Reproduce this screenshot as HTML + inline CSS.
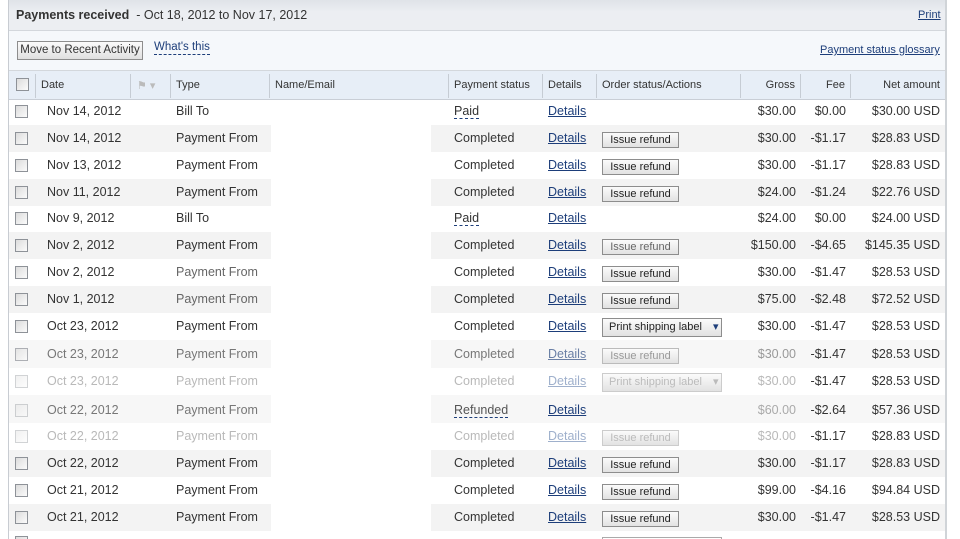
<!DOCTYPE html>
<html><head><meta charset="utf-8"><style>
*{margin:0;padding:0;box-sizing:border-box}
html,body{width:960px;height:539px;overflow:hidden}
body{background:#fff;font-family:"Liberation Sans",Arial,sans-serif;font-size:12px;color:#333;position:relative}
.a{position:absolute}
.lb{position:absolute;left:8px;top:0;width:1px;height:539px;background:#c8ccd2}
.rb{position:absolute;left:945px;top:0;width:2px;height:539px;background:#d0d4d8}
.hdr{left:9px;top:0;width:936px;height:31px;background:linear-gradient(#dfe3e8,#eceef2 40%,#eceef2);border-bottom:1px solid #d3d7dc}
.tb{left:9px;top:31px;width:936px;height:40px;background:#f5f8fb;border-bottom:1px solid #d3d7dc}
.th{left:9px;top:71px;width:936px;height:29px;background:#e7eef7;border-bottom:1px solid #c9ced6}
.sep{position:absolute;top:74px;width:1px;height:24px;background:#c6ccd4}
.cb{position:absolute;width:13px;height:13px;border:1px solid #8e9298;background:linear-gradient(135deg,#dcdcdc,#fbfbfb)}
a{color:#1d3e7a;text-decoration:underline}
.row{position:absolute;left:9px;width:936px}
.g{background:#f3f3f3}
.w{position:absolute;left:262px;width:160px;background:#fff;top:0;bottom:0}
.t{position:absolute;font-size:12.5px;white-space:nowrap}
.btn{position:absolute;left:593px;width:77px;height:16px;border:1px solid #8d8d8d;background:linear-gradient(#fbfbfb,#e2e2e2);font-size:11px;text-align:center;line-height:14px;color:#222}
.r{text-align:right}
.dash{border-bottom:1px dashed #1d3e7a}
.f{color:#b9b9b9}
.f .cb{opacity:.4}
</style></head><body>
<div class="lb"></div><div class="rb"></div>
<div class="a hdr"></div>
<div class="a" style="left:16px;top:8px;font-size:12.5px"><b>Payments received</b> &nbsp;- Oct 18, 2012 to Nov 17, 2012</div>
<div class="a" style="left:918px;top:9px;font-size:11px"><a>Print</a></div>
<div class="a tb"></div>
<div class="a" style="left:17px;top:41px;width:126px;height:19px;border:1px solid #8d8d8d;background:linear-gradient(#fbfbfb,#e0e0e0);font-size:11.5px;text-align:center;line-height:17px">Move to Recent Activity</div>
<div class="a" style="left:154px;top:41px;font-size:11.5px;color:#1d3e7a;border-bottom:1px dashed #1d3e7a;line-height:13px">What's this</div>
<div class="a" style="left:820px;top:44px;font-size:11px"><a>Payment status glossary</a></div>
<div class="a th"></div>
<div class="sep" style="left:35px"></div><div class="sep" style="left:130px"></div><div class="sep" style="left:170px"></div><div class="sep" style="left:269px"></div><div class="sep" style="left:448px"></div><div class="sep" style="left:542px"></div><div class="sep" style="left:596px"></div><div class="sep" style="left:740px"></div><div class="sep" style="left:800px"></div><div class="sep" style="left:850px"></div>
<div class="cb" style="left:16px;top:78px"></div>
<div class="a" style="left:41px;top:79px;font-size:11px">Date</div>
<div class="a" style="left:137px;top:79px;font-size:11px;color:#bbb">⚑ ▾</div>
<div class="a" style="left:176px;top:79px;font-size:11px">Type</div>
<div class="a" style="left:275px;top:79px;font-size:11px">Name/Email</div>
<div class="a" style="left:454px;top:79px;font-size:11px">Payment status</div>
<div class="a" style="left:548px;top:79px;font-size:11px">Details</div>
<div class="a" style="left:602px;top:79px;font-size:11px">Order status/Actions</div>
<div class="a r" style="left:740px;top:79px;width:55px;font-size:11px">Gross</div>
<div class="a r" style="left:800px;top:79px;width:45px;font-size:11px">Fee</div>
<div class="a r" style="left:850px;top:79px;width:90px;font-size:11px">Net amount</div>

<div class="row" style="top:99px;height:26px"><div class="cb" style="left:6px;top:6px"></div><div class="t" style="left:38px;top:5px">Nov 14, 2012</div><div class="t" style="left:167px;top:5px">Bill To</div><div class="t dash" style="left:445px;top:5px;color:#333">Paid</div><div class="t" style="left:539px;top:5px"><a>Details</a></div><div class="t r" style="left:731px;top:5px;width:56px">$30.00</div><div class="t r" style="left:791px;top:5px;width:46px">$0.00</div><div class="t r" style="left:841px;top:5px;width:90px">$30.00 USD</div></div>

<div class="row g" style="top:125px;height:27px"><div class="w"></div><div class="cb" style="left:6px;top:7px"></div><div class="t" style="left:38px;top:6px">Nov 14, 2012</div><div class="t" style="left:167px;top:6px">Payment From</div><div class="t" style="left:445px;top:6px">Completed</div><div class="t" style="left:539px;top:6px"><a>Details</a></div><div class="btn" style="top:7px">Issue refund</div><div class="t r" style="left:731px;top:6px;width:56px">$30.00</div><div class="t r" style="left:791px;top:6px;width:46px">-$1.17</div><div class="t r" style="left:841px;top:6px;width:90px">$28.83 USD</div></div>

<div class="row" style="top:152px;height:27px"><div class="cb" style="left:6px;top:7px"></div><div class="t" style="left:38px;top:6px">Nov 13, 2012</div><div class="t" style="left:167px;top:6px">Payment From</div><div class="t" style="left:445px;top:6px">Completed</div><div class="t" style="left:539px;top:6px"><a>Details</a></div><div class="btn" style="top:7px">Issue refund</div><div class="t r" style="left:731px;top:6px;width:56px">$30.00</div><div class="t r" style="left:791px;top:6px;width:46px">-$1.17</div><div class="t r" style="left:841px;top:6px;width:90px">$28.83 USD</div></div>

<div class="row g" style="top:179px;height:27px"><div class="w"></div><div class="cb" style="left:6px;top:7px"></div><div class="t" style="left:38px;top:6px">Nov 11, 2012</div><div class="t" style="left:167px;top:6px">Payment From</div><div class="t" style="left:445px;top:6px">Completed</div><div class="t" style="left:539px;top:6px"><a>Details</a></div><div class="btn" style="top:7px">Issue refund</div><div class="t r" style="left:731px;top:6px;width:56px">$24.00</div><div class="t r" style="left:791px;top:6px;width:46px">-$1.24</div><div class="t r" style="left:841px;top:6px;width:90px">$22.76 USD</div></div>

<div class="row" style="top:206px;height:26px"><div class="cb" style="left:6px;top:6px"></div><div class="t" style="left:38px;top:5px">Nov 9, 2012</div><div class="t" style="left:167px;top:5px">Bill To</div><div class="t dash" style="left:445px;top:5px">Paid</div><div class="t" style="left:539px;top:5px"><a>Details</a></div><div class="t r" style="left:731px;top:5px;width:56px">$24.00</div><div class="t r" style="left:791px;top:5px;width:46px">$0.00</div><div class="t r" style="left:841px;top:5px;width:90px">$24.00 USD</div></div>

<div class="row g" style="top:232px;height:27px"><div class="w"></div><div class="cb" style="left:6px;top:7px"></div><div class="t" style="left:38px;top:6px">Nov 2, 2012</div><div class="t" style="left:167px;top:6px">Payment From</div><div class="t" style="left:445px;top:6px">Completed</div><div class="t" style="left:539px;top:6px"><a>Details</a></div><div class="btn" style="top:7px;color:#666">Issue refund</div><div class="t r" style="left:731px;top:6px;width:56px">$150.00</div><div class="t r" style="left:791px;top:6px;width:46px">-$4.65</div><div class="t r" style="left:841px;top:6px;width:90px">$145.35 USD</div></div>

<div class="row" style="top:259px;height:27px"><div class="cb" style="left:6px;top:7px"></div><div class="t" style="left:38px;top:6px">Nov 2, 2012</div><div class="t" style="left:167px;top:6px;color:#666">Payment From</div><div class="t" style="left:445px;top:6px">Completed</div><div class="t" style="left:539px;top:6px"><a>Details</a></div><div class="btn" style="top:7px">Issue refund</div><div class="t r" style="left:731px;top:6px;width:56px">$30.00</div><div class="t r" style="left:791px;top:6px;width:46px">-$1.47</div><div class="t r" style="left:841px;top:6px;width:90px">$28.53 USD</div></div>

<div class="row g" style="top:286px;height:27px"><div class="w"></div><div class="cb" style="left:6px;top:7px"></div><div class="t" style="left:38px;top:6px">Nov 1, 2012</div><div class="t" style="left:167px;top:6px;color:#666">Payment From</div><div class="t" style="left:445px;top:6px">Completed</div><div class="t" style="left:539px;top:6px"><a>Details</a></div><div class="btn" style="top:7px">Issue refund</div><div class="t r" style="left:731px;top:6px;width:56px">$75.00</div><div class="t r" style="left:791px;top:6px;width:46px">-$2.48</div><div class="t r" style="left:841px;top:6px;width:90px">$72.52 USD</div></div>

<div class="row" style="top:313px;height:27px"><div class="cb" style="left:6px;top:7px"></div><div class="t" style="left:38px;top:6px">Oct 23, 2012</div><div class="t" style="left:167px;top:6px">Payment From</div><div class="t" style="left:445px;top:6px">Completed</div><div class="t" style="left:539px;top:6px"><a>Details</a></div><div class="btn" style="top:5px;width:120px;height:19px;line-height:17px;text-align:left;padding-left:6px">Print shipping label <span style="color:#1d3e7a;margin-left:8px">▾</span></div><div class="t r" style="left:731px;top:6px;width:56px">$30.00</div><div class="t r" style="left:791px;top:6px;width:46px">-$1.47</div><div class="t r" style="left:841px;top:6px;width:90px">$28.53 USD</div></div>

<div class="row g" style="top:340px;height:28px;background:#f7f7f7"><div class="w"></div><div class="cb" style="left:6px;top:8px;opacity:.7"></div><div class="t" style="left:38px;top:7px;color:#777">Oct 23, 2012</div><div class="t" style="left:167px;top:7px;color:#777">Payment From</div><div class="t" style="left:445px;top:7px;color:#777">Completed</div><div class="t" style="left:539px;top:7px"><a style="color:#6a7fa5">Details</a></div><div class="btn" style="top:8px;color:#999;border-color:#bbb">Issue refund</div><div class="t r" style="left:731px;top:7px;width:56px;color:#999">$30.00</div><div class="t r" style="left:791px;top:7px;width:46px">-$1.47</div><div class="t r" style="left:841px;top:7px;width:90px">$28.53 USD</div></div>

<div class="row f" style="top:368px;height:27px"><div class="cb" style="left:6px;top:7px"></div><div class="t" style="left:38px;top:6px">Oct 23, 2012</div><div class="t" style="left:167px;top:6px">Payment From</div><div class="t" style="left:445px;top:6px">Completed</div><div class="t" style="left:539px;top:6px"><a style="color:#9fb0cc">Details</a></div><div class="btn" style="top:5px;width:120px;height:19px;line-height:17px;text-align:left;padding-left:6px;color:#bbb;border-color:#ccc">Print shipping label <span style="margin-left:8px">▾</span></div><div class="t r" style="left:731px;top:6px;width:56px">$30.00</div><div class="t r" style="left:791px;top:6px;width:46px;color:#333">-$1.47</div><div class="t r" style="left:841px;top:6px;width:90px;color:#333">$28.53 USD</div></div>

<div class="row g" style="top:395px;height:28px;background:#f7f7f7"><div class="w"></div><div class="cb" style="left:6px;top:9px;opacity:.4"></div><div class="t" style="left:38px;top:8px;color:#777">Oct 22, 2012</div><div class="t" style="left:167px;top:8px;color:#777">Payment From</div><div class="t dash" style="left:445px;top:8px;color:#555">Refunded</div><div class="t" style="left:539px;top:8px"><a>Details</a></div><div class="t r" style="left:731px;top:8px;width:56px;color:#aaa">$60.00</div><div class="t r" style="left:791px;top:8px;width:46px">-$2.64</div><div class="t r" style="left:841px;top:8px;width:90px">$57.36 USD</div></div>

<div class="row f" style="top:423px;height:27px"><div class="cb" style="left:6px;top:7px"></div><div class="t" style="left:38px;top:6px">Oct 22, 2012</div><div class="t" style="left:167px;top:6px">Payment From</div><div class="t" style="left:445px;top:6px">Completed</div><div class="t" style="left:539px;top:6px"><a style="color:#9fb0cc">Details</a></div><div class="btn" style="top:7px;color:#bbb;border-color:#ccc">Issue refund</div><div class="t r" style="left:731px;top:6px;width:56px">$30.00</div><div class="t r" style="left:791px;top:6px;width:46px;color:#333">-$1.17</div><div class="t r" style="left:841px;top:6px;width:90px;color:#333">$28.83 USD</div></div>

<div class="row g" style="top:450px;height:27px"><div class="w"></div><div class="cb" style="left:6px;top:7px"></div><div class="t" style="left:38px;top:6px">Oct 22, 2012</div><div class="t" style="left:167px;top:6px">Payment From</div><div class="t" style="left:445px;top:6px">Completed</div><div class="t" style="left:539px;top:6px"><a>Details</a></div><div class="btn" style="top:7px">Issue refund</div><div class="t r" style="left:731px;top:6px;width:56px">$30.00</div><div class="t r" style="left:791px;top:6px;width:46px">-$1.17</div><div class="t r" style="left:841px;top:6px;width:90px">$28.83 USD</div></div>

<div class="row" style="top:477px;height:27px"><div class="cb" style="left:6px;top:7px"></div><div class="t" style="left:38px;top:6px">Oct 21, 2012</div><div class="t" style="left:167px;top:6px">Payment From</div><div class="t" style="left:445px;top:6px">Completed</div><div class="t" style="left:539px;top:6px"><a>Details</a></div><div class="btn" style="top:7px">Issue refund</div><div class="t r" style="left:731px;top:6px;width:56px">$99.00</div><div class="t r" style="left:791px;top:6px;width:46px">-$4.16</div><div class="t r" style="left:841px;top:6px;width:90px">$94.84 USD</div></div>

<div class="row g" style="top:504px;height:27px"><div class="w"></div><div class="cb" style="left:6px;top:7px"></div><div class="t" style="left:38px;top:6px">Oct 21, 2012</div><div class="t" style="left:167px;top:6px">Payment From</div><div class="t" style="left:445px;top:6px">Completed</div><div class="t" style="left:539px;top:6px"><a>Details</a></div><div class="btn" style="top:7px">Issue refund</div><div class="t r" style="left:731px;top:6px;width:56px">$30.00</div><div class="t r" style="left:791px;top:6px;width:46px">-$1.47</div><div class="t r" style="left:841px;top:6px;width:90px">$28.53 USD</div></div>

<div class="cb" style="left:15px;top:536px"></div>
<div class="a" style="left:602px;top:537px;width:120px;height:4px;border:1px solid #aaa"></div>
</body></html>
